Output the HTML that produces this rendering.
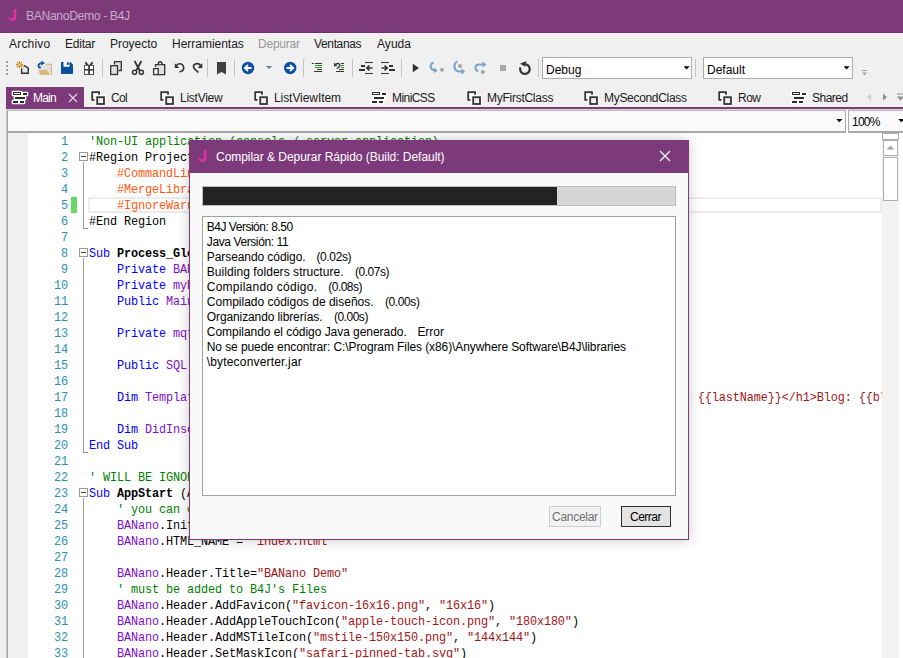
<!DOCTYPE html>
<html><head><meta charset="utf-8"><title>B4J</title><style>*{margin:0;padding:0;box-sizing:border-box}
html,body{width:903px;height:658px;overflow:hidden;background:#f0f0f0;font-family:"Liberation Sans",sans-serif;font-size:12px;color:#000;position:relative}
.a{position:absolute;display:block}
.t{position:absolute;white-space:pre;line-height:normal}
#code{font-family:"Liberation Mono",monospace;font-size:11.85px;letter-spacing:-0.11px;line-height:16px}
.ln{position:absolute;left:0;width:40px;text-align:right;color:#2b91af;white-space:pre;height:16px}
.l{position:absolute;left:61px;white-space:pre;height:16px}
.c{color:#008000}.k{color:#0000ff}.p{color:#8010c8}.d{color:#ff5a10}.s{color:#a31515}.b{font-weight:bold}
</style></head><body>
<div class="a" style="left:0px;top:0px;width:903px;height:32px;background:#7d3a7b;"></div>
<div class="a" style="left:0px;top:32px;width:903px;height:1px;background:#772a71;"></div>
<div class="a" style="left:0px;top:33px;width:903px;height:1px;background:#f9fbf9;"></div>
<svg class="a" style="left:0px;top:0px" width="24" height="26" viewBox="0 0 24 26"><path d="M15 9 V17 C15 19 13.8 19.8 12.2 19.8 C11 19.8 10 19.2 9.3 17.8" fill="none" stroke="#e2309c" stroke-width="2.5"/></svg>
<span class="t" style="left:26px;top:9px;font-size:12.2px;color:#c9a9cc;letter-spacing:-0.377px;">BANanoDemo - B4J</span>
<span class="t" style="left:9px;top:37px;font-size:12px;color:#1b1b1b;letter-spacing:0.197px;">Archivo</span>
<span class="t" style="left:65px;top:37px;font-size:12px;color:#1b1b1b;letter-spacing:-0.210px;">Editar</span>
<span class="t" style="left:110px;top:37px;font-size:12px;color:#1b1b1b;letter-spacing:-0.037px;">Proyecto</span>
<span class="t" style="left:172px;top:37px;font-size:12px;color:#1b1b1b;letter-spacing:-0.021px;">Herramientas</span>
<span class="t" style="left:258px;top:37px;font-size:12px;color:#999;letter-spacing:-0.226px;">Depurar</span>
<span class="t" style="left:314px;top:37px;font-size:12px;color:#1b1b1b;letter-spacing:-0.350px;">Ventanas</span>
<span class="t" style="left:377px;top:37px;font-size:12px;color:#1b1b1b;letter-spacing:0.047px;">Ayuda</span>
<div class="a" style="left:6px;top:61px;width:2px;height:2px;background:#a0a0a0;"></div>
<div class="a" style="left:6px;top:65px;width:2px;height:2px;background:#a0a0a0;"></div>
<div class="a" style="left:6px;top:69px;width:2px;height:2px;background:#a0a0a0;"></div>
<div class="a" style="left:6px;top:73px;width:2px;height:2px;background:#a0a0a0;"></div>
<div class="a" style="left:102px;top:59px;width:1px;height:18px;background:#c4c4c4;"></div>
<div class="a" style="left:207px;top:59px;width:1px;height:18px;background:#c4c4c4;"></div>
<div class="a" style="left:234px;top:59px;width:1px;height:18px;background:#c4c4c4;"></div>
<div class="a" style="left:303px;top:59px;width:1px;height:18px;background:#c4c4c4;"></div>
<div class="a" style="left:352px;top:59px;width:1px;height:18px;background:#c4c4c4;"></div>
<div class="a" style="left:401px;top:59px;width:1px;height:18px;background:#c4c4c4;"></div>
<div class="a" style="left:538px;top:59px;width:1px;height:18px;background:#c4c4c4;"></div>
<div class="a" style="left:695px;top:59px;width:1px;height:18px;background:#c4c4c4;"></div>
<svg class="a" style="left:14px;top:59px" width="18" height="18" viewBox="0 0 18 18"><path d="M7.6 6.7 H10.5 L14.3 9.2 V14.2 H7.6 Z" fill="#e4e4e4" stroke="#333333" stroke-width="1.4" stroke-linejoin="miter"/><circle cx="5.5" cy="5.6" r="4.6" fill="#f0f0f0" opacity="0.85"/><g stroke="#d9820f" stroke-width="1.1"><line x1="6.80" y1="5.60" x2="9.10" y2="5.60"/><line x1="4.20" y1="5.60" x2="1.90" y2="5.60"/><line x1="5.50" y1="6.90" x2="5.50" y2="9.20"/><line x1="5.50" y1="4.30" x2="5.50" y2="2.00"/><line x1="6.42" y1="6.52" x2="8.05" y2="8.15"/><line x1="4.58" y1="6.52" x2="2.95" y2="8.15"/><line x1="6.42" y1="4.68" x2="8.05" y2="3.05"/><line x1="4.58" y1="4.68" x2="2.95" y2="3.05"/></g><circle cx="5.5" cy="5.6" r="1.3" fill="#fff" stroke="#d9820f" stroke-width="0.9"/></svg>
<svg class="a" style="left:34px;top:59px" width="20" height="18" viewBox="0 0 20 18"><rect x="3.8" y="6.2" width="13.4" height="9.8" fill="#e2e2e2"/><path d="M12 5.3 H17.4 V16" fill="none" stroke="#dcb57a" stroke-width="1.2"/><path d="M4.9 10.9 H12.9 L15.9 15.9 H6 Z" fill="#dcb57a"/><path d="M6.8 8.6 C3.6 8.8 3.4 4.3 7.8 4.1" fill="none" stroke="#0a50a0" stroke-width="1.8"/><path d="M7.3 1.8 L11 4.1 L7.3 6.6 Z" fill="#0a50a0"/></svg>
<svg class="a" style="left:60px;top:61px" width="14" height="14" viewBox="0 0 14 14"><path d="M1 1 H10.5 L13 3.5 V13 H1 Z" fill="#0a50a0"/><rect x="3.5" y="1" width="6" height="4.8" fill="#fff"/><rect x="6.8" y="1.3" width="2" height="2.6" fill="#0a50a0"/></svg>
<svg class="a" style="left:84px;top:60px" width="11" height="16" viewBox="0 0 11 16"><rect x="0.1" y="5" width="9.9" height="9.9" fill="#333333"/><path d="M5 5.2 C3.5 3.8 2.2 1.2 1.5 1.8 C0.6 2.6 1.5 4.8 2.2 5 Z M5 5.2 C6.5 3.8 7.8 1.2 8.5 1.8 C9.4 2.6 8.5 4.8 7.8 5 Z" fill="#333333"/><rect x="0.9" y="5.75" width="3.3" height="3.35" fill="#fff"/><rect x="5.9" y="5.75" width="3.2" height="3.35" fill="#fff"/><rect x="0.9" y="10.6" width="3.3" height="3.5" fill="#fff"/><rect x="5.9" y="10.6" width="3.2" height="3.5" fill="#fff"/></svg>
<svg class="a" style="left:108px;top:59px" width="16" height="18" viewBox="0 0 16 18"><path d="M6.5 5.5 V2.7 H13.3 V11.5 H10.5" fill="#e0e0e0" stroke="#333333" stroke-width="1.3"/><rect x="2.7" y="6.7" width="6.8" height="8.8" fill="#e0e0e0" stroke="#333333" stroke-width="1.3"/></svg>
<svg class="a" style="left:130px;top:59px" width="16" height="18" viewBox="0 0 16 18"><g fill="none" stroke="#333333" stroke-width="1.5"><path d="M4.6 2 L9.6 11.3 M11.4 2 L6.4 11.3" stroke-width="1.8"/><circle cx="4.6" cy="13.3" r="2.1" stroke-width="1.4"/><circle cx="11.4" cy="13.3" r="2.1" stroke-width="1.4"/></g></svg>
<svg class="a" style="left:152px;top:59px" width="15" height="18" viewBox="0 0 15 18"><path d="M3.5 8 V5.6 H12.7 V15.6 H6.5" fill="#e0e0e0" stroke="#333333" stroke-width="1.3"/><path d="M5.6 6 V4.6 A2.5 2.5 0 0 1 10.6 4.6 V6 Z" fill="#333333"/><circle cx="8.1" cy="4.4" r="0.95" fill="#fff"/><rect x="1.6" y="9.6" width="4.6" height="6" fill="#f4f4f4" stroke="#333333" stroke-width="1.3"/></svg>
<svg class="a" style="left:173px;top:61px" width="13" height="13" viewBox="0 0 13 13"><path d="M3.5 4.5 A4 4 0 1 1 6.5 10.8" fill="none" stroke="#333333" stroke-width="1.6"/><path d="M1.8 2.2 V7 H6.3 Z" fill="#333333"/></svg>
<svg class="a" style="left:191px;top:61px" width="13" height="13" viewBox="0 0 13 13"><path d="M9.6 4.5 C7 1 2 3 2.5 6 C3 8 6 10 7.3 11.5" fill="none" stroke="#333333" stroke-width="1.6"/><path d="M11.3 2 V7 H6.6 Z" fill="#333333"/></svg>
<svg class="a" style="left:216px;top:61px" width="11" height="15" viewBox="0 0 11 15"><path d="M1 1 H10 V13.6 L5.5 11 L1 13.6 Z" fill="#414141"/></svg>
<svg class="a" style="left:241px;top:61px" width="14" height="14" viewBox="0 0 14 14"><circle cx="7" cy="7" r="6.2" fill="#0a50a0"/><path d="M10.5 7 H4.5 M7 4 L3.8 7 L7 10" fill="none" stroke="#fff" stroke-width="1.8"/></svg>
<svg class="a" style="left:265px;top:65px" width="8" height="5" viewBox="0 0 8 5"><path d="M1 1 H7 L4 4 Z" fill="#4a7fc0"/></svg>
<svg class="a" style="left:283px;top:61px" width="14" height="14" viewBox="0 0 14 14"><circle cx="7.2" cy="7" r="6.2" fill="#0a50a0"/><path d="M3.5 7 H9.5 M7 4 L10.2 7 L7 10" fill="none" stroke="#fff" stroke-width="1.8"/></svg>
<svg class="a" style="left:310px;top:61px" width="14" height="13" viewBox="0 0 14 13"><rect x="1.8" y="2" width="2" height="1" fill="#333333"/><rect x="5" y="2" width="7" height="1" fill="#333333"/><rect x="5" y="4" width="7" height="1" fill="#2c9a2c"/><rect x="5" y="6" width="7" height="1" fill="#2c9a2c"/><rect x="7" y="8" width="5" height="1" fill="#333333"/><rect x="4" y="10" width="8" height="1" fill="#333333"/></svg>
<svg class="a" style="left:332px;top:61px" width="14" height="13" viewBox="0 0 14 13"><path d="M3.5 3.6 C5 2.2 7.4 2 7.9 3.8 C8.3 5.2 6.6 6.5 4.8 7.6" fill="none" stroke="#333333" stroke-width="1.3"/><path d="M2 1.6 V5.2 H5.6 Z" fill="#333333"/><rect x="9" y="2" width="3" height="1" fill="#333333"/><rect x="9" y="4" width="3" height="1" fill="#2c9a2c"/><rect x="9" y="6" width="3" height="1" fill="#2c9a2c"/><rect x="7" y="8" width="5" height="1" fill="#333333"/><rect x="4" y="10" width="8" height="1" fill="#333333"/></svg>
<svg class="a" style="left:357px;top:60px" width="18" height="16" viewBox="0 0 18 16"><rect x="8" y="2" width="8" height="1" fill="#333333"/><rect x="4" y="5" width="4" height="2" fill="#333333"/><rect x="2" y="9" width="6" height="2" fill="#333333"/><rect x="8" y="13" width="8" height="1" fill="#333333"/><path d="M15.5 8 H10.5 M12.5 5.5 L9.8 8 L12.5 10.5" fill="none" stroke="#333333" stroke-width="1.6"/></svg>
<svg class="a" style="left:379px;top:60px" width="18" height="16" viewBox="0 0 18 16"><rect x="2" y="2" width="8" height="1" fill="#333333"/><rect x="10" y="5" width="4" height="2" fill="#333333"/><rect x="10" y="9" width="6" height="2" fill="#333333"/><rect x="2" y="13" width="8" height="1" fill="#333333"/><path d="M2.5 8 H7.5 M5.5 5.5 L8.2 8 L5.5 10.5" fill="none" stroke="#333333" stroke-width="1.6"/></svg>
<svg class="a" style="left:411px;top:62px" width="10" height="12" viewBox="0 0 10 12"><path d="M1.8 1.8 V10.2 L8 6 Z" fill="#303030"/></svg>
<svg class="a" style="left:428px;top:60px" width="18" height="15" viewBox="0 0 18 15"><path d="M5.5 2.5 C1.5 4 1.5 9 6.5 10.5" fill="none" stroke="#7aa6d3" stroke-width="2.1"/><path d="M6 7.5 L10 10.5 L6 13 Z" fill="#7aa6d3"/><circle cx="14" cy="9.8" r="2" fill="#a3a3a3"/></svg>
<svg class="a" style="left:452px;top:60px" width="15" height="16" viewBox="0 0 15 16"><path d="M5.5 1.5 C1.5 3 1 11 7 11.5 H10" fill="none" stroke="#7aa6d3" stroke-width="2.1"/><path d="M9.5 8 L13 11.5 L9.5 15 Z" fill="#7aa6d3"/><circle cx="8" cy="5.9" r="2" fill="#a3a3a3"/></svg>
<svg class="a" style="left:473px;top:60px" width="15" height="15" viewBox="0 0 15 15"><path d="M5 11.5 C1 9 2 4 6.5 4.5 H10" fill="none" stroke="#7aa6d3" stroke-width="2.1"/><path d="M9.5 1.5 L13.5 4.5 L9.5 7.5 Z" fill="#7aa6d3"/><circle cx="9.8" cy="12" r="2" fill="#a3a3a3"/></svg>
<div class="a" style="left:500px;top:65px;width:6px;height:6px;background:#a8a8a8;"></div>
<svg class="a" style="left:517px;top:60px" width="16" height="16" viewBox="0 0 16 16"><path d="M3.39 7.46 A4.8 4.8 0 1 0 8.73 4.37" fill="none" stroke="#333" stroke-width="2.2"/><path d="M3 3.8 L9.3 0.9 L8.4 6.7 Z" fill="#333"/></svg>
<div class="a" style="left:542px;top:57px;width:150px;height:22px;background:#fff;border:1px solid #adadad;box-sizing:border-box;"></div>
<span class="t" style="left:546px;top:63px;font-size:12px;color:#000;">Debug</span>
<svg class="a" style="left:683px;top:66px" width="8" height="5" viewBox="0 0 8 5"><path d="M0.6 0.2 H6.6 L3.6 3.4 Z" fill="#000"/></svg>
<div class="a" style="left:703px;top:57px;width:150px;height:22px;background:#fff;border:1px solid #adadad;box-sizing:border-box;"></div>
<span class="t" style="left:707px;top:63px;font-size:12px;color:#000;">Default</span>
<svg class="a" style="left:843px;top:66px" width="8" height="5" viewBox="0 0 8 5"><path d="M0.6 0.2 H6.6 L3.6 3.4 Z" fill="#000"/></svg>
<svg class="a" style="left:861px;top:69px" width="8" height="8" viewBox="0 0 8 8"><rect x="1" y="1" width="5" height="1" fill="#a0a0a0"/><path d="M1 3.5 H6 L3.5 6.3 Z" fill="#a0a0a0"/></svg>
<div class="a" style="left:6px;top:87px;width:78px;height:22px;background:#7d3a7b;"></div>
<div class="a" style="left:6px;top:107px;width:897px;height:2px;background:#7d3a7b;"></div>
<svg class="a" style="left:11px;top:90px" width="18" height="15" viewBox="0 0 18 15"><rect x="0.7" y="0.7" width="10.6" height="5.6" rx="1" fill="#fff"/><rect x="10.7" y="1.7" width="6.6" height="4.6" rx="1" fill="#fff"/><rect x="2.7" y="5.7" width="12.6" height="4.6" rx="1" fill="#fff"/><rect x="0.7" y="9.7" width="7.6" height="4.6" rx="1" fill="#fff"/><rect x="7.7" y="9.7" width="6.6" height="4.6" rx="1" fill="#fff"/><rect x="2" y="2" width="8" height="3" fill="#2b2b2b"/><rect x="12" y="3" width="4" height="2" fill="#2b2b2b"/><rect x="4" y="7" width="10" height="2" fill="#2b2b2b"/><rect x="2" y="11" width="5" height="2" fill="#2b2b2b"/><rect x="9" y="11" width="4" height="2" fill="#2b2b2b"/><rect x="3" y="3" width="6" height="1" fill="#fff"/></svg>
<span class="t" style="left:33px;top:91px;font-size:12px;color:#fff;letter-spacing:-0.804px;">Main</span>
<svg class="a" style="left:68px;top:93px" width="10" height="10" viewBox="0 0 10 10"><path d="M1 1 L9 9 M9 1 L1 9" stroke="#e8d4e8" stroke-width="1.1"/></svg>
<svg class="a" style="left:91px;top:91px" width="16" height="16" viewBox="0 0 16 16"><path d="M0 0 H10 V5 H5 V10 H0 Z" fill="#fff"/><rect x="4.5" y="4.5" width="10.5" height="10.5" fill="#fff"/><path d="M3.5 8.9 H1.2 V1.2 H8 V3.8" fill="none" stroke="#333" stroke-width="1.8"/><rect x="6.2" y="6.2" width="6.8" height="6.8" fill="#f0f0f0" stroke="#333" stroke-width="1.8"/></svg>
<span class="t" style="left:111px;top:91px;font-size:12px;color:#1b1b1b;letter-spacing:-0.653px;">Col</span>
<svg class="a" style="left:160px;top:91px" width="16" height="16" viewBox="0 0 16 16"><path d="M0 0 H10 V5 H5 V10 H0 Z" fill="#fff"/><rect x="4.5" y="4.5" width="10.5" height="10.5" fill="#fff"/><path d="M3.5 8.9 H1.2 V1.2 H8 V3.8" fill="none" stroke="#333" stroke-width="1.8"/><rect x="6.2" y="6.2" width="6.8" height="6.8" fill="#f0f0f0" stroke="#333" stroke-width="1.8"/></svg>
<span class="t" style="left:180px;top:91px;font-size:12px;color:#1b1b1b;letter-spacing:-0.253px;">ListView</span>
<svg class="a" style="left:254px;top:91px" width="16" height="16" viewBox="0 0 16 16"><path d="M0 0 H10 V5 H5 V10 H0 Z" fill="#fff"/><rect x="4.5" y="4.5" width="10.5" height="10.5" fill="#fff"/><path d="M3.5 8.9 H1.2 V1.2 H8 V3.8" fill="none" stroke="#333" stroke-width="1.8"/><rect x="6.2" y="6.2" width="6.8" height="6.8" fill="#f0f0f0" stroke="#333" stroke-width="1.8"/></svg>
<span class="t" style="left:274px;top:91px;font-size:12px;color:#1b1b1b;letter-spacing:-0.073px;">ListViewItem</span>
<svg class="a" style="left:370px;top:90px" width="18" height="15" viewBox="0 0 18 15"><rect x="0.7" y="0.7" width="10.6" height="5.6" rx="1" fill="#fff"/><rect x="10.7" y="1.7" width="6.6" height="4.6" rx="1" fill="#fff"/><rect x="2.7" y="5.7" width="12.6" height="4.6" rx="1" fill="#fff"/><rect x="0.7" y="9.7" width="7.6" height="4.6" rx="1" fill="#fff"/><rect x="7.7" y="9.7" width="6.6" height="4.6" rx="1" fill="#fff"/><rect x="2" y="2" width="8" height="3" fill="#2b2b2b"/><rect x="12" y="3" width="4" height="2" fill="#2b2b2b"/><rect x="4" y="7" width="10" height="2" fill="#2b2b2b"/><rect x="2" y="11" width="5" height="2" fill="#2b2b2b"/><rect x="9" y="11" width="4" height="2" fill="#2b2b2b"/><rect x="3" y="3" width="6" height="1" fill="#fff"/></svg>
<span class="t" style="left:392px;top:91px;font-size:12px;color:#1b1b1b;letter-spacing:-0.563px;">MiniCSS</span>
<svg class="a" style="left:467px;top:91px" width="16" height="16" viewBox="0 0 16 16"><path d="M0 0 H10 V5 H5 V10 H0 Z" fill="#fff"/><rect x="4.5" y="4.5" width="10.5" height="10.5" fill="#fff"/><path d="M3.5 8.9 H1.2 V1.2 H8 V3.8" fill="none" stroke="#333" stroke-width="1.8"/><rect x="6.2" y="6.2" width="6.8" height="6.8" fill="#f0f0f0" stroke="#333" stroke-width="1.8"/></svg>
<span class="t" style="left:487px;top:91px;font-size:12px;color:#1b1b1b;letter-spacing:-0.266px;">MyFirstClass</span>
<svg class="a" style="left:584px;top:91px" width="16" height="16" viewBox="0 0 16 16"><path d="M0 0 H10 V5 H5 V10 H0 Z" fill="#fff"/><rect x="4.5" y="4.5" width="10.5" height="10.5" fill="#fff"/><path d="M3.5 8.9 H1.2 V1.2 H8 V3.8" fill="none" stroke="#333" stroke-width="1.8"/><rect x="6.2" y="6.2" width="6.8" height="6.8" fill="#f0f0f0" stroke="#333" stroke-width="1.8"/></svg>
<span class="t" style="left:604px;top:91px;font-size:12px;color:#1b1b1b;letter-spacing:-0.309px;">MySecondClass</span>
<svg class="a" style="left:718px;top:91px" width="16" height="16" viewBox="0 0 16 16"><path d="M0 0 H10 V5 H5 V10 H0 Z" fill="#fff"/><rect x="4.5" y="4.5" width="10.5" height="10.5" fill="#fff"/><path d="M3.5 8.9 H1.2 V1.2 H8 V3.8" fill="none" stroke="#333" stroke-width="1.8"/><rect x="6.2" y="6.2" width="6.8" height="6.8" fill="#f0f0f0" stroke="#333" stroke-width="1.8"/></svg>
<span class="t" style="left:738px;top:91px;font-size:12px;color:#1b1b1b;letter-spacing:-0.503px;">Row</span>
<svg class="a" style="left:790px;top:90px" width="18" height="15" viewBox="0 0 18 15"><rect x="0.7" y="0.7" width="10.6" height="5.6" rx="1" fill="#fff"/><rect x="10.7" y="1.7" width="6.6" height="4.6" rx="1" fill="#fff"/><rect x="2.7" y="5.7" width="12.6" height="4.6" rx="1" fill="#fff"/><rect x="0.7" y="9.7" width="7.6" height="4.6" rx="1" fill="#fff"/><rect x="7.7" y="9.7" width="6.6" height="4.6" rx="1" fill="#fff"/><rect x="2" y="2" width="8" height="3" fill="#2b2b2b"/><rect x="12" y="3" width="4" height="2" fill="#2b2b2b"/><rect x="4" y="7" width="10" height="2" fill="#2b2b2b"/><rect x="2" y="11" width="5" height="2" fill="#2b2b2b"/><rect x="9" y="11" width="4" height="2" fill="#2b2b2b"/><rect x="3" y="3" width="6" height="1" fill="#fff"/></svg>
<span class="t" style="left:812px;top:91px;font-size:12px;color:#1b1b1b;letter-spacing:-0.519px;">Shared</span>
<svg class="a" style="left:866px;top:93px" width="6" height="8" viewBox="0 0 6 8"><path d="M5 0.5 V7.5 L1 4 Z" fill="#cdcdcd"/></svg>
<svg class="a" style="left:882px;top:93px" width="6" height="8" viewBox="0 0 6 8"><path d="M1 0.5 V7.5 L5 4 Z" fill="#8f8f8f"/></svg>
<svg class="a" style="left:896px;top:92px" width="7" height="10" viewBox="0 0 7 10"><rect x="1" y="1.5" width="7" height="1" fill="#8f8f8f"/><path d="M1 4.5 H8 L4.5 8.5 Z" fill="#8f8f8f"/></svg>
<div class="a" style="left:6px;top:109px;width:897px;height:549px;background:#fff;"></div>
<div class="a" style="left:6px;top:109px;width:897px;height:1px;background:#d9d9d9;"></div>
<div class="a" style="left:6px;top:110px;width:1px;height:548px;background:#c9c9c9;"></div>
<div class="a" style="left:7px;top:110px;width:1px;height:548px;background:#a5a5a5;"></div>
<div class="a" style="left:7px;top:110px;width:839px;height:23px;background:#fafafa;border-left:1px solid #a5a5a5;border-top:1px solid #b9b9b9;border-right:1px solid #a8a8a8;border-bottom:2px solid #a8a8a8;box-sizing:border-box;"></div>
<svg class="a" style="left:836px;top:118px" width="7" height="5" viewBox="0 0 7 5"><path d="M0.2 1 H6.5 L3.35 4.2 Z" fill="#000"/></svg>
<div class="a" style="left:846px;top:110px;width:2px;height:21px;background:#ffffff;"></div>
<div class="a" style="left:848px;top:110px;width:60px;height:23px;background:#fafafa;border-left:1px solid #a8a8a8;border-top:1px solid #b9b9b9;border-bottom:2px solid #a8a8a8;box-sizing:border-box;"></div>
<span class="t" style="left:852px;top:115px;font-size:12px;color:#000;letter-spacing:-0.764px;">100%</span>
<svg class="a" style="left:898px;top:118px" width="7" height="5" viewBox="0 0 7 5"><path d="M0.2 1 H6.5 L3.35 4.2 Z" fill="#000"/></svg>
<div class="a" style="left:8px;top:133px;width:20px;height:525px;background:#f0f0f0;"></div>
<div class="a" style="left:88px;top:197px;width:794px;height:16px;background:transparent;border:2px solid #ececec;box-sizing:border-box;"></div>
<div class="a" id="code" style="left:28px;top:133px;width:854px;height:525px;overflow:hidden"><div class="ln" style="top:1px">1</div>
<div class="l" style="top:1px"><span class="c">&#x27;Non-UI application (console / server application)</span></div>
<div class="ln" style="top:17px">2</div>
<div class="l" style="top:17px">#Region Project Attributes</div>
<div class="ln" style="top:33px">3</div>
<div class="l" style="top:33px">    <span class="d">#CommandLineArgs:</span></div>
<div class="ln" style="top:49px">4</div>
<div class="l" style="top:49px">    <span class="d">#MergeLibraries: True</span></div>
<div class="ln" style="top:65px">5</div>
<div class="l" style="top:65px">    <span class="d">#IgnoreWarnings: 12</span></div>
<div class="ln" style="top:81px">6</div>
<div class="l" style="top:81px">#End Region</div>
<div class="ln" style="top:97px">7</div>
<div class="l" style="top:97px"></div>
<div class="ln" style="top:113px">8</div>
<div class="l" style="top:113px"><span class="k">Sub </span><span class="b">Process_Globals</span></div>
<div class="ln" style="top:129px">9</div>
<div class="l" style="top:129px">    <span class="k">Private </span><span class="p">BANano</span></div>
<div class="ln" style="top:145px">10</div>
<div class="l" style="top:145px">    <span class="k">Private </span><span class="p">myBANano</span></div>
<div class="ln" style="top:161px">11</div>
<div class="l" style="top:161px">    <span class="k">Public </span><span class="p">Main</span></div>
<div class="ln" style="top:177px">12</div>
<div class="l" style="top:177px"></div>
<div class="ln" style="top:193px">13</div>
<div class="l" style="top:193px">    <span class="k">Private </span><span class="p">mqtt</span></div>
<div class="ln" style="top:209px">14</div>
<div class="l" style="top:209px"></div>
<div class="ln" style="top:225px">15</div>
<div class="l" style="top:225px">    <span class="k">Public </span><span class="p">SQL</span></div>
<div class="ln" style="top:241px">16</div>
<div class="l" style="top:241px"></div>
<div class="ln" style="top:257px">17</div>
<div class="l" style="top:257px">    <span class="k">Dim </span><span class="p">Template</span><span class="k"> As </span><span class="p">String</span> = <span class="s">&quot;&lt;h1&gt;{{firstName}} xxxxxxxxxxxxxxxxxxxxxxxxxxxxxxxxxxxxx- {{lastName}}&lt;/h1&gt;Blog: {{blogURL}}&quot;</span></div>
<div class="ln" style="top:273px">18</div>
<div class="l" style="top:273px"></div>
<div class="ln" style="top:289px">19</div>
<div class="l" style="top:289px">    <span class="k">Dim </span><span class="p">DidInsert</span></div>
<div class="ln" style="top:305px">20</div>
<div class="l" style="top:305px"><span class="k">End Sub</span></div>
<div class="ln" style="top:321px">21</div>
<div class="l" style="top:321px"></div>
<div class="ln" style="top:337px">22</div>
<div class="l" style="top:337px"><span class="c">&#x27; WILL BE IGNORED</span></div>
<div class="ln" style="top:353px">23</div>
<div class="l" style="top:353px"><span class="k">Sub </span><span class="b">AppStart</span> (Args() As String)</div>
<div class="ln" style="top:369px">24</div>
<div class="l" style="top:369px">    <span class="c">&#x27; you can change some BANano settings here</span></div>
<div class="ln" style="top:385px">25</div>
<div class="l" style="top:385px">    <span class="p">BANano</span>.Initialize(&quot;BANano&quot;, &quot;BANanoDemo&quot;,1)</div>
<div class="ln" style="top:401px">26</div>
<div class="l" style="top:401px">    <span class="p">BANano</span>.HTML_NAME = <span class="s">&quot;index.html&quot;</span></div>
<div class="ln" style="top:417px">27</div>
<div class="l" style="top:417px"></div>
<div class="ln" style="top:433px">28</div>
<div class="l" style="top:433px">    <span class="p">BANano</span>.Header.Title=<span class="s">&quot;BANano Demo&quot;</span></div>
<div class="ln" style="top:449px">29</div>
<div class="l" style="top:449px">    <span class="c">&#x27; must be added to B4J&#x27;s Files</span></div>
<div class="ln" style="top:465px">30</div>
<div class="l" style="top:465px">    <span class="p">BANano</span>.Header.AddFavicon(<span class="s">&quot;favicon-16x16.png&quot;</span>, <span class="s">&quot;16x16&quot;</span>)</div>
<div class="ln" style="top:481px">31</div>
<div class="l" style="top:481px">    <span class="p">BANano</span>.Header.AddAppleTouchIcon(<span class="s">&quot;apple-touch-icon.png&quot;</span>, <span class="s">&quot;180x180&quot;</span>)</div>
<div class="ln" style="top:497px">32</div>
<div class="l" style="top:497px">    <span class="p">BANano</span>.Header.AddMSTileIcon(<span class="s">&quot;mstile-150x150.png&quot;</span>, <span class="s">&quot;144x144&quot;</span>)</div>
<div class="ln" style="top:513px">33</div>
<div class="l" style="top:513px">    <span class="p">BANano</span>.Header.SetMaskIcon(<span class="s">&quot;safari-pinned-tab.svg&quot;</span>)</div></div>
<div class="a" style="left:71px;top:197px;width:6px;height:16px;background:#68d868;"></div>
<div class="a" style="left:83px;top:162px;width:1px;height:67px;background:#9a9a9a;"></div>
<div class="a" style="left:83px;top:228px;width:5px;height:1px;background:#9a9a9a;"></div>
<div class="a" style="left:83px;top:258px;width:1px;height:195px;background:#9a9a9a;"></div>
<div class="a" style="left:83px;top:452px;width:5px;height:1px;background:#9a9a9a;"></div>
<div class="a" style="left:83px;top:498px;width:1px;height:160px;background:#9a9a9a;"></div>
<svg class="a" style="left:79px;top:152px" width="9" height="9" viewBox="0 0 9 9"><rect x="0.5" y="0.5" width="8" height="8" fill="#fff" stroke="#9a9a9a"/><rect x="2" y="4" width="5" height="1" fill="#404040"/></svg>
<svg class="a" style="left:79px;top:248px" width="9" height="9" viewBox="0 0 9 9"><rect x="0.5" y="0.5" width="8" height="8" fill="#fff" stroke="#9a9a9a"/><rect x="2" y="4" width="5" height="1" fill="#404040"/></svg>
<svg class="a" style="left:79px;top:488px" width="9" height="9" viewBox="0 0 9 9"><rect x="0.5" y="0.5" width="8" height="8" fill="#fff" stroke="#9a9a9a"/><rect x="2" y="4" width="5" height="1" fill="#404040"/></svg>
<div class="a" style="left:882px;top:133px;width:17px;height:525px;background:#f2f2f2;"></div>
<div class="a" style="left:882px;top:133px;width:17px;height:7px;background:#fff;border:1px solid #adadad;box-sizing:border-box;"></div>
<div class="a" style="left:883px;top:140px;width:15px;height:16px;background:#fff;border:1px solid #adadad;box-sizing:border-box;"></div>
<svg class="a" style="left:886px;top:145px" width="9" height="5" viewBox="0 0 9 5"><path d="M0.5 4.5 H8.5 L4.5 0.5 Z" fill="#a8a8a8"/></svg>
<div class="a" style="left:883px;top:157px;width:15px;height:44px;background:#fff;border:1px solid #adadad;box-sizing:border-box;"></div>
<div class="a" style="left:899px;top:133px;width:4px;height:525px;background:#fff;"></div>
<div class="a" style="left:189px;top:140px;width:500px;height:400px;background:#f9f9f9;border:1px solid #7d3a7b;box-sizing:border-box;box-shadow:0 0 12px rgba(0,0,0,0.22);"></div>
<div class="a" style="left:189px;top:140px;width:500px;height:33px;background:#7d3a7b;"></div>
<svg class="a" style="left:189.5px;top:141px" width="24" height="26" viewBox="0 0 24 26"><path d="M15 9 V17 C15 19 13.8 19.8 12.2 19.8 C11 19.8 10 19.2 9.3 17.8" fill="none" stroke="#e2309c" stroke-width="2.5"/></svg>
<span class="t" style="left:216px;top:150px;font-size:12px;color:#fff;letter-spacing:-0.037px;">Compilar &amp; Depurar Rápido (Build: Default)</span>
<svg class="a" style="left:659px;top:150px" width="12" height="12" viewBox="0 0 12 12"><path d="M1 1 L11 11 M11 1 L1 11" stroke="#fff" stroke-width="1.2"/></svg>
<div class="a" style="left:202px;top:186px;width:474px;height:20px;background:#d6d6d6;border:1px solid #bcbcbc;box-sizing:border-box;"></div>
<div class="a" style="left:203px;top:187px;width:354px;height:18px;background:#232323;"></div>
<div class="a" style="left:202px;top:216px;width:474px;height:280px;background:#fff;border:1px solid #a0a0a0;box-sizing:border-box;"></div>
<span class="t" style="left:206.8px;top:220px;font-size:12px;color:#000;letter-spacing:-0.485px;">B4J Versión: 8.50</span>
<span class="t" style="left:206.8px;top:235px;font-size:12px;color:#000;letter-spacing:-0.402px;">Java Versión: 11</span>
<span class="t" style="left:206.8px;top:250px;font-size:12px;color:#000;letter-spacing:-0.080px;">Parseando código.</span>
<span class="t" style="left:316.4px;top:250px;font-size:12px;color:#000;letter-spacing:-0.358px;">(0.02s)</span>
<span class="t" style="left:206.8px;top:265px;font-size:12px;color:#000;letter-spacing:0.054px;">Building folders structure.</span>
<span class="t" style="left:354.9px;top:265px;font-size:12px;color:#000;letter-spacing:-0.442px;">(0.07s)</span>
<span class="t" style="left:206.8px;top:280px;font-size:12px;color:#000;letter-spacing:0.243px;">Compilando código.</span>
<span class="t" style="left:328.3px;top:280px;font-size:12px;color:#000;letter-spacing:-0.525px;">(0.08s)</span>
<span class="t" style="left:206.8px;top:295px;font-size:12px;color:#000;letter-spacing:0.001px;">Compilado códigos de diseños.</span>
<span class="t" style="left:384.9px;top:295px;font-size:12px;color:#000;letter-spacing:-0.392px;">(0.00s)</span>
<span class="t" style="left:206.8px;top:310px;font-size:12px;color:#000;letter-spacing:-0.108px;">Organizando librerías.</span>
<span class="t" style="left:333.9px;top:310px;font-size:12px;color:#000;letter-spacing:-0.475px;">(0.00s)</span>
<span class="t" style="left:206.8px;top:325px;font-size:12px;color:#000;letter-spacing:-0.043px;">Compilando el código Java generado.</span>
<span class="t" style="left:417.4px;top:325px;font-size:12px;color:#000;letter-spacing:-0.042px;">Error</span>
<span class="t" style="left:206.8px;top:340px;font-size:12px;color:#000;letter-spacing:-0.092px;">No se puede encontrar: C:\Program Files (x86)\Anywhere Software\B4J\libraries</span>
<span class="t" style="left:206.7px;top:355px;font-size:12px;color:#000;letter-spacing:0.180px;">\byteconverter.jar</span>
<div class="a" style="left:549px;top:506px;width:52px;height:21px;background:#f2f2f2;border:1px solid #cdcdcd;box-sizing:border-box;"></div>
<span class="t" style="left:552px;top:510px;font-size:12px;color:#6f6f6f;letter-spacing:-0.275px;">Cancelar</span>
<div class="a" style="left:621px;top:506px;width:50px;height:21px;background:#e3e3e3;border:1px solid #2d2d2d;box-sizing:border-box;"></div>
<span class="t" style="left:630px;top:510px;font-size:12px;color:#000;letter-spacing:-0.501px;">Cerrar</span>
</body></html>
